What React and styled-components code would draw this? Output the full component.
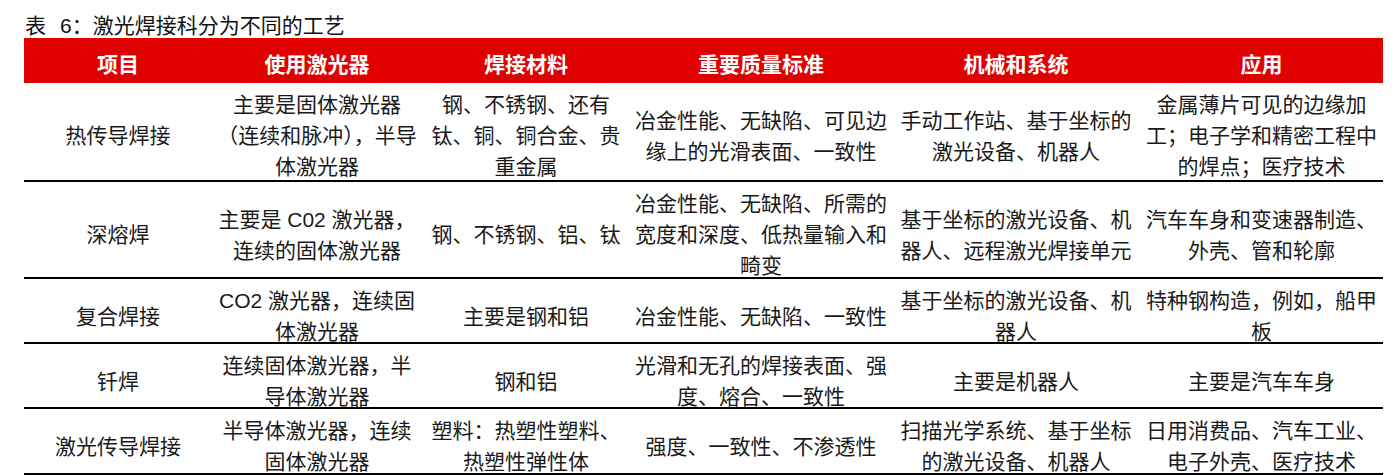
import React from "react";
import styled, { createGlobalStyle } from "styled-components";

const GlobalStyle = createGlobalStyle`
  body {
    margin: 0;
    background: #ffffff;
    font-family: "Liberation Sans", "Noto Sans CJK SC", sans-serif;
    color: #1a1a1a;
  }
`;

const COLS = "188px 210px 208px 262px 248px 243px";

const columns = ["项目", "使用激光器", "焊接材料", "重要质量标准", "机械和系统", "应用"];

const rows = [
  {
    height: 99,
    cells: [
      ["热传导焊接"],
      ["主要是固体激光器", "（连续和脉冲），半导", "体激光器"],
      ["钢、不锈钢、还有", "钛、铜、铜合金、贵", "重金属"],
      ["冶金性能、无缺陷、可见边", "缘上的光滑表面、一致性"],
      ["手动工作站、基于坐标的", "激光设备、机器人"],
      ["金属薄片可见的边缘加", "工；电子学和精密工程中", "的焊点；医疗技术"],
    ],
  },
  {
    height: 97,
    cells: [
      ["深熔焊"],
      ["主要是 C02 激光器，", "连续的固体激光器"],
      ["钢、不锈钢、铝、钛"],
      ["冶金性能、无缺陷、所需的", "宽度和深度、低热量输入和", "畸变"],
      ["基于坐标的激光设备、机", "器人、远程激光焊接单元"],
      ["汽车车身和变速器制造、", "外壳、管和轮廓"],
    ],
  },
  {
    height: 65,
    cells: [
      ["复合焊接"],
      ["CO2 激光器，连续固", "体激光器"],
      ["主要是钢和铝"],
      ["冶金性能、无缺陷、一致性"],
      ["基于坐标的激光设备、机", "器人"],
      ["特种钢构造，例如，船甲", "板"],
    ],
  },
  {
    height: 65,
    cells: [
      ["钎焊"],
      ["连续固体激光器，半", "导体激光器"],
      ["钢和铝"],
      ["光滑和无孔的焊接表面、强", "度、熔合、一致性"],
      ["主要是机器人"],
      ["主要是汽车车身"],
    ],
  },
  {
    height: 66,
    cells: [
      ["激光传导焊接"],
      ["半导体激光器，连续", "固体激光器"],
      ["塑料：热塑性塑料、", "热塑性弹性体"],
      ["强度、一致性、不渗透性"],
      ["扫描光学系统、基于坐标", "的激光设备、机器人"],
      ["日用消费品、汽车工业、", "电子外壳、医疗技术"],
    ],
  },
];

const Page = styled.div`
  padding: 14px 0 0 24px;
  width: 1359px;
`;

const Caption = styled.div`
  height: 24px;
  line-height: 24px;
  font-size: 21px;
  color: #111;
  white-space: nowrap;
  padding-left: 1px;
`;

const CaptionNo = styled.span`
  margin-left: 14px;
`;

const HeaderRow = styled.div`
  display: grid;
  grid-template-columns: ${COLS};
  height: 45px;
  background: #e00000;
`;

const HeadCell = styled.div`
  display: flex;
  align-items: center;
  justify-content: center;
  padding-top: 8px;
  box-sizing: border-box;
  color: #ffffff;
  font-weight: 700;
  font-size: 21px;
  line-height: 31px;
  white-space: nowrap;
`;

const Row = styled.div`
  display: grid;
  grid-template-columns: ${COLS};
  height: ${(p) => p.$h}px;
  box-sizing: border-box;
  border-bottom: 2px solid #000;
`;

const Cell = styled.div`
  display: flex;
  flex-direction: column;
  align-items: center;
  justify-content: center;
  padding-top: 6px;
  box-sizing: border-box;
  font-size: 21px;
  line-height: 31px;
  text-align: center;
  white-space: nowrap;
  color: #1a1a1a;
`;

const Line = styled.span`
  display: block;
`;

export default function App() {
  return (
    <Page>
      <GlobalStyle />
      <Caption>
        表<CaptionNo>6：</CaptionNo>激光焊接科分为不同的工艺
      </Caption>
      <HeaderRow>
        {columns.map((c) => (
          <HeadCell key={c}>{c}</HeadCell>
        ))}
      </HeaderRow>
      {rows.map((r, i) => (
        <Row key={i} $h={r.height}>
          {r.cells.map((lines, j) => (
            <Cell key={j}>
              {lines.map((l, k) => (
                <Line key={k}>{l}</Line>
              ))}
            </Cell>
          ))}
        </Row>
      ))}
    </Page>
  );
}
